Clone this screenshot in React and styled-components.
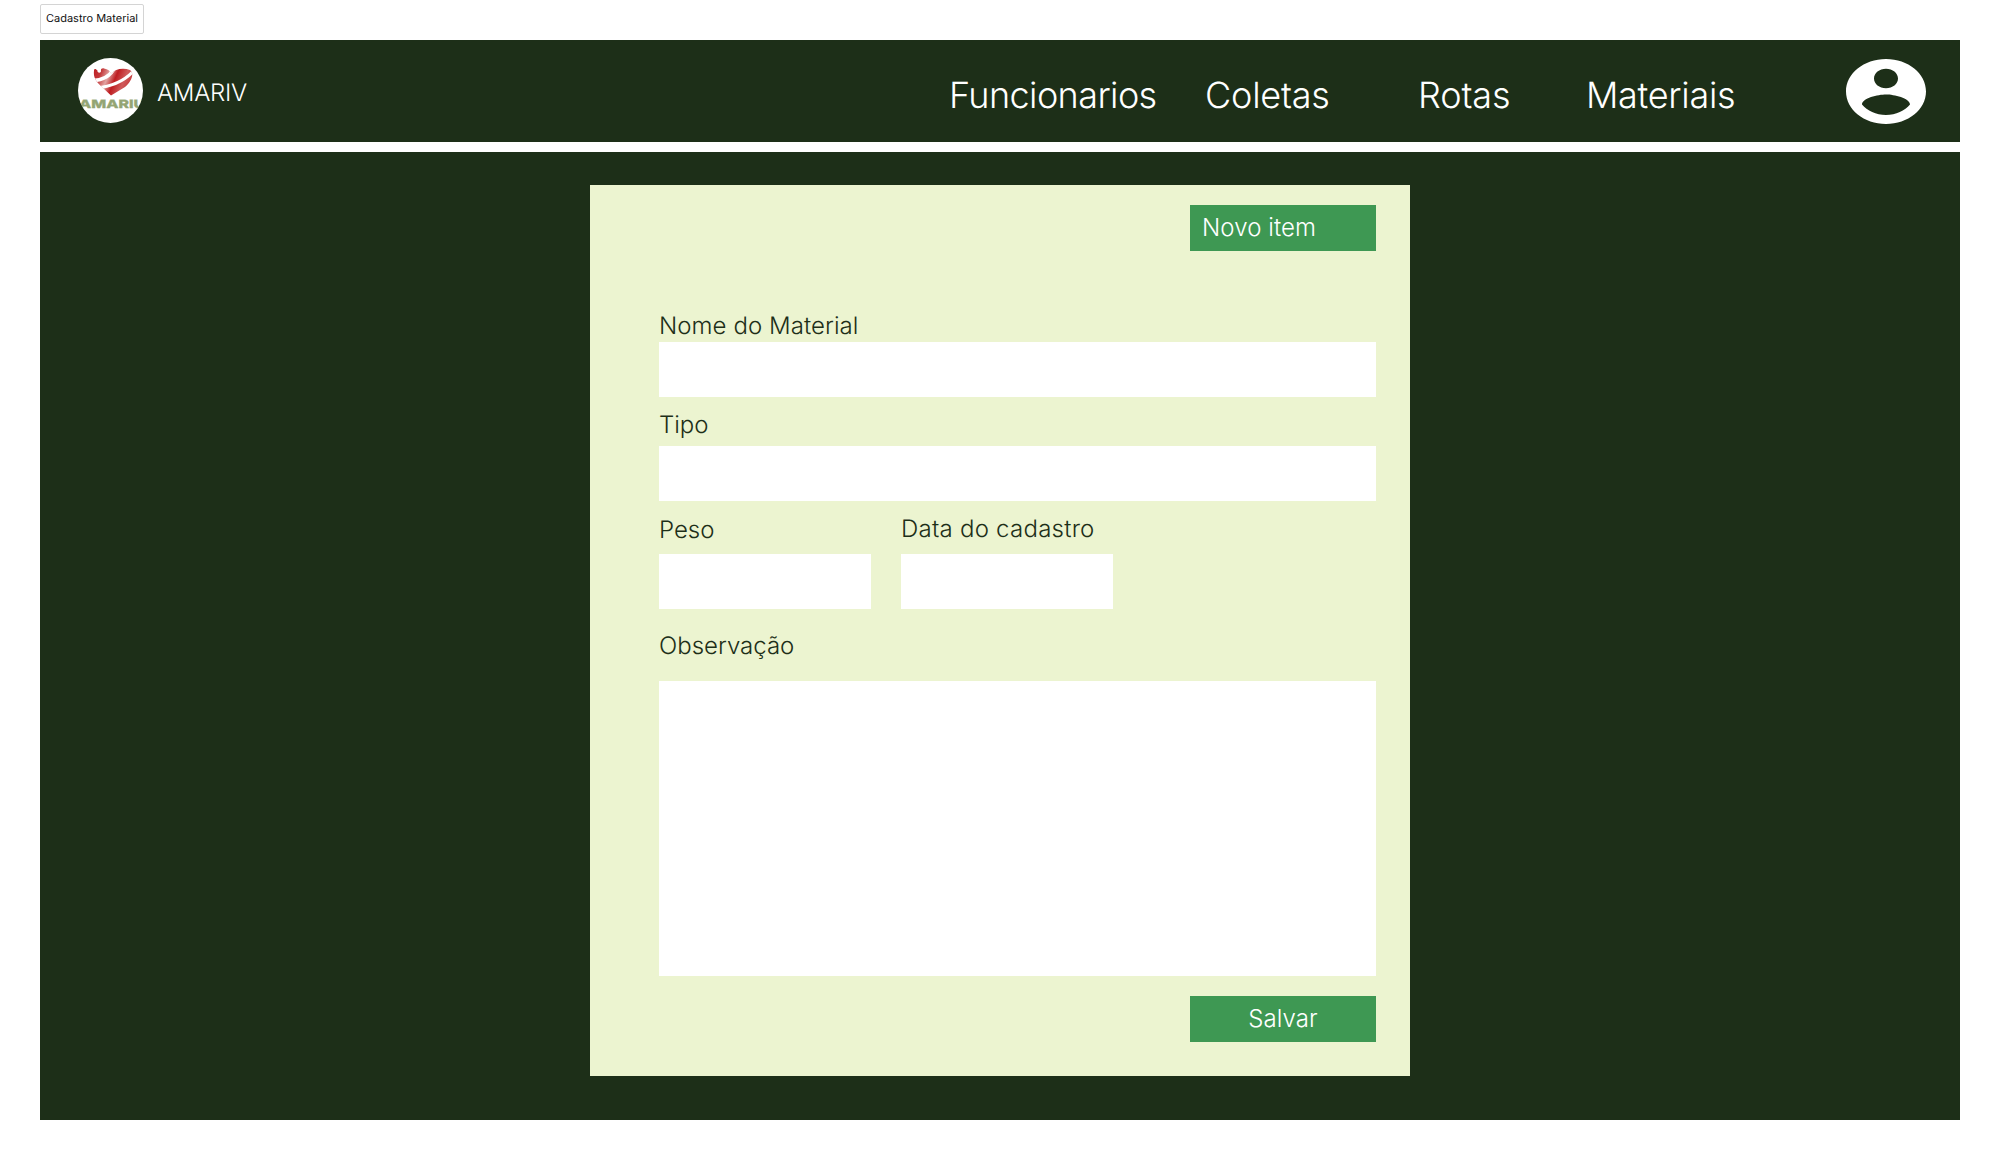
import React from 'react';
import styled, { createGlobalStyle } from 'styled-components';

const Global = createGlobalStyle`
  *, *::before, *::after { box-sizing: border-box; }
  body { margin: 0; background: #fff; text-rendering: geometricPrecision; }
`;

const Page = styled.div`
  height: 1160px;
  padding: 4px 40px 0;
  display: flex;
  flex-direction: column;
  font-family: Inter, "Liberation Sans", sans-serif;
  font-weight: 300;
  font-size: 24px;
  line-height: 30px;
  color: #1d2f18;
`;

const Tab = styled.div`
  width: 104px;
  height: 30px;
  flex: none;
  margin-bottom: 6px;
  padding: 0 0 2px 5px;
  display: flex;
  align-items: center;
  border: 1px solid #d4d4d4;
  border-radius: 2px;
  font-size: 11px;
  font-weight: 400;
  line-height: 14px;
  color: #111;
  white-space: nowrap;
`;

const Header = styled.header`
  height: 102px;
  flex: none;
  padding: 18px 34px 0 38px;
  display: flex;
  align-items: flex-start;
  background: #1d2f18;
  color: #fff;
`;

const Logo = styled.svg`
  width: 65px;
  height: 65px;
  flex: none;
`;

const Brand = styled.span`
  flex: none;
  margin: 20px 0 0 14px;
  width: 792px;
  letter-spacing: -0.3px;
`;

const Nav = styled.nav`
  flex: 1;
  margin-top: 15px;
  display: flex;
  font-size: 36px;
  line-height: 44px;
`;

const NavItem = styled.a`
  flex: none;
  width: ${(p) => p.$width}px;
  letter-spacing: ${(p) => p.$tracking}px;
  white-space: nowrap;
`;

const Avatar = styled.svg`
  width: 80px;
  height: 65px;
  flex: none;
  margin-top: 0.5px;
`;

const Main = styled.main`
  height: 968px;
  flex: none;
  margin-top: 10px;
  padding-top: 33px;
  display: flex;
  justify-content: center;
  align-items: flex-start;
  background: #1d2f18;
`;

const Card = styled.form`
  width: 820px;
  height: 891px;
  padding: 20px 34px 0 69px;
  display: flex;
  flex-direction: column;
  background: #ecf4d0;
`;

const Button = styled.button`
  width: 186px;
  height: 46px;
  flex: none;
  align-self: flex-end;
  margin: 0 0 ${(p) => p.$after || 0}px;
  padding: 0 12px;
  border: 0;
  background: #3e9853;
  color: #fff;
  font: inherit;
  letter-spacing: 0.1px;
  text-align: ${(p) => p.$align || 'center'};
`;

const Field = styled.label`
  width: ${(p) => p.$width || 717}px;
  display: flex;
  flex-direction: column;
  gap: ${(p) => p.$gap}px;
  margin-top: ${(p) => p.$top || 0}px;
  letter-spacing: ${(p) => p.$tracking || 0}px;
`;

const Row = styled.div`
  display: flex;
  align-items: flex-end;
  gap: 30px;
  margin-top: 13px;
`;

const Input = styled.input`
  width: 100%;
  height: 55px;
  padding: 0 12px;
  border: 0;
  background: #fff;
  font: inherit;
`;

const TextArea = styled.textarea`
  width: 100%;
  height: 295px;
  margin-bottom: 20px;
  padding: 12px;
  border: 0;
  background: #fff;
  resize: none;
  font: inherit;
`;

const NAV = [
  ['Funcionarios', 256, -0.6],
  ['Coletas', 213, -0.2],
  ['Rotas', 168, -0.1],
  ['Materiais', 150, -0.3],
];

function AmarivLogo() {
  return (
    <Logo viewBox="0 0 65 65">
      <defs>
        <clipPath id="disc"><circle cx="32.5" cy="32.5" r="32.5" /></clipPath>
        <clipPath id="heart">
          <path d="M16 13 C16 10 18 11 19.500 12.500 C19 15 23 15.500 23 13 C22.500 11 24 10 26 10.500 C30 11 32 13 33 15.500 C37 11 45 9.500 52 12 C57 16 53 24 47 29 L33 37.500 L25 30 C19 25 15 20 16 13Z" />
        </clipPath>
        <linearGradient id="shade" x1="0" x2="1" y1="0.3" y2="0.6">
          <stop offset="0" stopColor="#bd1c20" />
          <stop offset="0.2" stopColor="#c4383a" />
          <stop offset="0.38" stopColor="#e2a4a2" />
          <stop offset="0.55" stopColor="#be1c20" />
          <stop offset="0.75" stopColor="#cf5a5a" />
          <stop offset="1" stopColor="#c22c2e" />
        </linearGradient>
      </defs>
      <circle cx="32.5" cy="32.5" r="32.5" fill="#fff" />
      <g clipPath="url(#heart)">
        <rect x="12" y="8" width="44" height="32" fill="url(#shade)" />
        <path d="M14 22.500 C24 22.500 32 19 37 9" fill="none" stroke="#fff" strokeWidth="3.600" />
        <path d="M18 30 C34 28.500 46 23 55 13.500" fill="none" stroke="#fff" strokeWidth="3" />
      </g>
      <g clipPath="url(#disc)">
        <text x="1" y="49.500" textLength="66" lengthAdjust="spacingAndGlyphs" fill="#94a574" stroke="#94a574" strokeWidth="0.3" fontFamily="Inter, sans-serif" fontWeight="800" fontSize="11.500">AMARIU</text>
      </g>
    </Logo>
  );
}

export default function App() {
  return (
    <>
      <Global />
      <Page>
        <Tab>Cadastro Material</Tab>
        <Header>
          <AmarivLogo />
          <Brand>AMARIV</Brand>
          <Nav>
            {NAV.map(([name, width, tracking]) => (
              <NavItem key={name} $width={width} $tracking={tracking}>{name}</NavItem>
            ))}
          </Nav>
          <Avatar viewBox="2 2 20 20" preserveAspectRatio="none" fill="#fff">
            <path d="M12 2C6.48 2 2 6.48 2 12s4.48 10 10 10 10-4.48 10-10S17.52 2 12 2zm0 3c1.66 0 3 1.34 3 3s-1.34 3-3 3-3-1.34-3-3 1.34-3 3-3zm0 14.2c-2.5 0-4.71-1.28-6-3.22.03-1.99 4-3.08 6-3.08 1.99 0 5.97 1.09 6 3.08-1.29 1.94-3.5 3.22-6 3.22z" />
          </Avatar>
        </Header>
        <Main>
          <Card>
            <Button type="button" $align="left" $after={60}>Novo item</Button>
            <Field $gap={1} $tracking={0.07}>Nome do Material<Input /></Field>
            <Field $gap={6} $top={13}>Tipo<Input /></Field>
            <Row>
              <Field $width={212} $gap={9}>Peso<Input /></Field>
              <Field $width={212} $gap={10} $tracking={0.25}>Data do cadastro<Input /></Field>
            </Row>
            <Field $gap={20} $top={22}>Observação<TextArea /></Field>
            <Button type="button">Salvar</Button>
          </Card>
        </Main>
      </Page>
    </>
  );
}
